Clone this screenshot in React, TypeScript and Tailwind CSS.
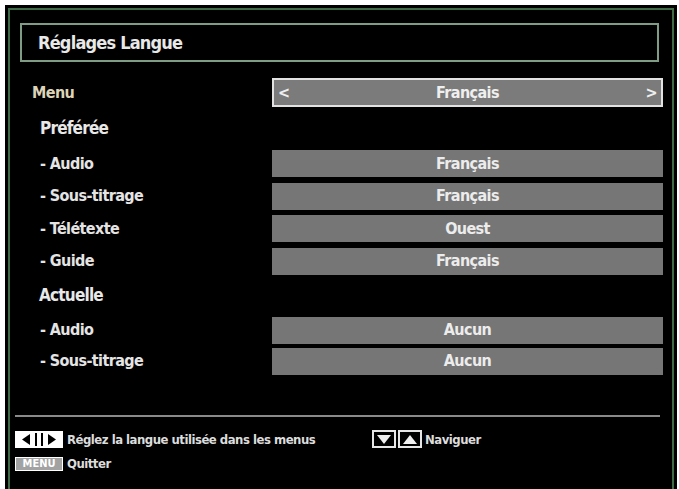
import React from "react";

const font = "font-['DejaVu_Sans_Condensed','DejaVu_Sans','Liberation_Sans',sans-serif] font-bold";

function ValueBox({ value }: { value: string }) {
  return (
    <div className="w-[391px] h-[27px] bg-[#767676] flex items-center justify-center text-[16px] tracking-[-0.6px] text-[#ececec]">
      {value}
    </div>
  );
}

function Row({ label, value }: { label: string; value: string }) {
  return (
    <div className="flex items-center">
      <div className="w-[262px] pl-[30px] text-[16px] tracking-[-0.6px] text-[#e4e4e4]">{label}</div>
      <ValueBox value={value} />
    </div>
  );
}

export default function App() {
  return (
    <div className={`w-[679px] h-[489px] bg-white pt-[5px] pl-[5px] pr-[2px] ${font}`}>
      <div className="h-full bg-black pt-[3px] pl-[3px] pr-[3px]">
        <div className="h-full border-2 border-b-0 border-[#3f6b47] flex flex-col">
          {/* Titre */}
          <div className="mt-[13px] ml-[10px] mr-[13px] h-[39px] border-2 border-[#7f9c85] flex items-center pl-[16px]">
            <span className="text-[18px] tracking-[-0.8px] text-[#e8e8e8]">Réglages Langue</span>
          </div>

          {/* Menu */}
          <div className="mt-[16px] flex items-center">
            <div className="w-[262px] pl-[22px] text-[16px] tracking-[-0.6px] text-[#ddd4b8]">Menu</div>
            <div className="w-[391px] h-[29px] border-2 border-[#e2e2e2] bg-[#7b7b7b] flex items-center justify-between px-[4px] text-[16px] tracking-[-0.6px] text-[#efefef]">
              <span>&lt;</span>
              <span>Français</span>
              <span>&gt;</span>
            </div>
          </div>

          {/* Préférée */}
          <div className="h-[43px] flex items-center pl-[30px] text-[17px] tracking-[-0.8px] text-[#e8e8e8]">
            Préférée
          </div>
          <div className="flex flex-col gap-[5.5px]">
            <Row label="- Audio" value="Français" />
            <Row label="- Sous-titrage" value="Français" />
            <Row label="- Télétexte" value="Ouest" />
            <Row label="- Guide" value="Français" />
          </div>

          {/* Actuelle */}
          <div className="h-[42px] flex items-center pl-[29px] text-[17px] tracking-[-0.8px] text-[#e8e8e8]">
            Actuelle
          </div>
          <div className="flex flex-col gap-[4px]">
            <Row label="- Audio" value="Aucun" />
            <Row label="- Sous-titrage" value="Aucun" />
          </div>

          {/* Séparateur */}
          <div className="mt-[40px] ml-[5px] mr-[12px] h-[2px] bg-[#8a8a8a]" />

          {/* Pied de page */}
          <div className="mt-[13px] ml-[5px] flex text-[13px] tracking-[-0.5px] text-[#dcdcdc]">
            <div className="flex flex-col gap-[5px] w-[357px]">
              <div className="flex items-center gap-[4px]">
                <div className="w-[48px] h-[17px] border border-white bg-white flex items-stretch p-[1px]">
                  <div className="flex-1 bg-white flex items-center justify-center">
                    <svg width="10" height="11" viewBox="0 0 10 11"><polygon points="9,0 9,11 1,5.5" fill="#000" /></svg>
                  </div>
                  <div className="w-[2px] bg-black" />
                  <div className="w-[4px] bg-white" />
                  <div className="w-[2px] bg-black" />
                  <div className="flex-1 bg-white flex items-center justify-center">
                    <svg width="10" height="11" viewBox="0 0 10 11"><polygon points="1,0 1,11 9,5.5" fill="#000" /></svg>
                  </div>
                </div>
                <span>Réglez la langue utilisée dans les menus</span>
              </div>
              <div className="flex items-center gap-[4px]">
                <div className="w-[48px] h-[14px] border border-white bg-[#a2a2a2] flex items-center justify-center text-[11px] tracking-[0px] leading-none text-white">
                  MENU
                </div>
                <span>Quitter</span>
              </div>
            </div>
            <div className="flex items-start">
              <div className="flex items-center gap-[3px]">
                <div className="w-[50px] h-[18px] flex gap-[2px]">
                  <div className="flex-1 border-2 border-[#e6e6e6] flex items-center justify-center">
                    <svg width="14" height="9" viewBox="0 0 14 9"><polygon points="0,0 14,0 7,9" fill="#f0f0f0" /></svg>
                  </div>
                  <div className="flex-1 border-2 border-[#e6e6e6] flex items-center justify-center">
                    <svg width="14" height="9" viewBox="0 0 14 9"><polygon points="0,9 14,9 7,0" fill="#f0f0f0" /></svg>
                  </div>
                </div>
                <span>Naviguer</span>
              </div>
            </div>
          </div>
        </div>
      </div>
    </div>
  );
}
